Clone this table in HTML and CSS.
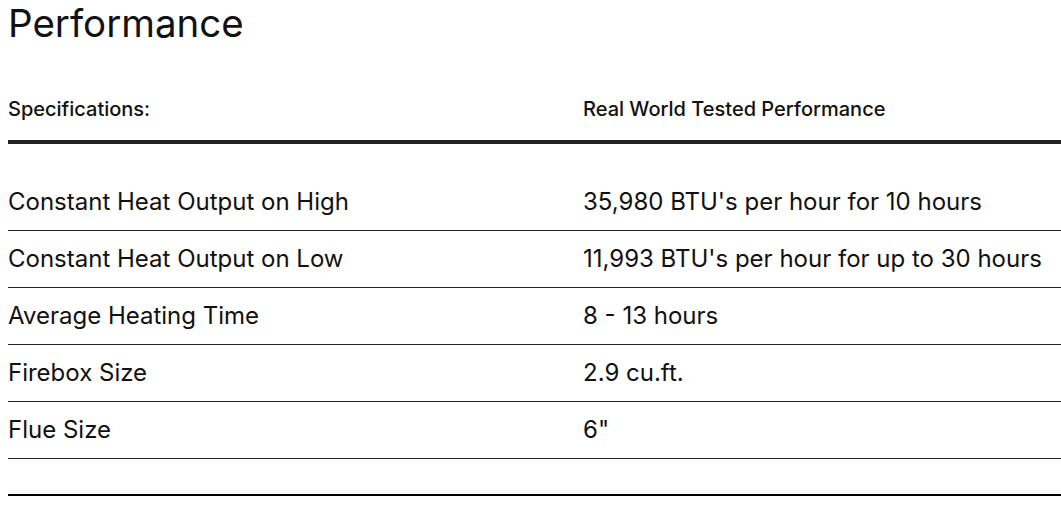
FILE: index.html
```html
<!DOCTYPE html>
<html>
<head>
<meta charset="utf-8">
<link rel="stylesheet" href="styles.css">
</head>
<body>
<div class="page">
  <h2 class="title">Performance</h2>
  <div class="specs">
    <div class="head">
      <div class="cell">Specifications:</div>
      <div class="cell">Real World Tested Performance</div>
    </div>
    <div class="body">
      <div class="row"><div class="cell">Constant Heat Output on High</div><div class="cell">35,980 BTU's per hour for 10 hours</div></div>
      <div class="row"><div class="cell">Constant Heat Output on Low</div><div class="cell">11,993 BTU's per hour for up to 30 hours</div></div>
      <div class="row"><div class="cell">Average Heating Time</div><div class="cell">8 - 13 hours</div></div>
      <div class="row"><div class="cell">Firebox Size</div><div class="cell">2.9 cu.ft.</div></div>
      <div class="row"><div class="cell">Flue Size</div><div class="cell">6"</div></div>
    </div>
    <div class="foot"></div>
  </div>
</div>
</body>
</html>
```
FILE: styles.css
```css
html, body {
  margin: 0;
  padding: 0;
  background: #fff;
}
body {
  font-family: Inter, "Noto Sans", sans-serif;
  color: #111;
  overflow: hidden;
}
.page {
  padding-left: 8px;
}
.title {
  margin: 0;
  font-size: 38.5px;
  font-weight: 400;
  line-height: 47px;
  color: #111;
}
.specs {
  margin-top: 50px;
}
.head {
  display: grid;
  grid-template-columns: 575px 1fr;
  font-size: 20px;
  font-weight: 500;
  line-height: 24px;
  padding-bottom: 19px;
  border-bottom: 4px solid #222;
}
.body {
  padding-top: 30px;
}
.row {
  display: grid;
  grid-template-columns: 575px 1fr;
  font-size: 24px;
  line-height: 24px;
  height: 56px;
  align-items: center;
  border-bottom: 1px solid #222;
}
.foot {
  margin-top: 35px;
  border-bottom: 2px solid #000;
}
```
